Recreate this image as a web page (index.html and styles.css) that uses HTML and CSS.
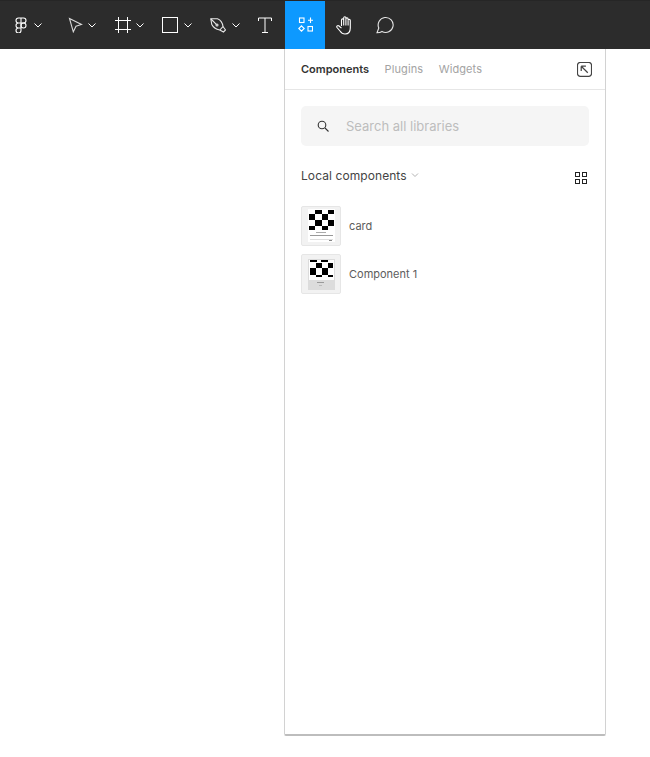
FILE: index.html
```html
<!DOCTYPE html>
<html lang="en">
<head>
    <meta charset="UTF-8">
    <title>Components</title>
    <link rel="stylesheet" href="styles.css">
</head>
<body>
    <header class="toolbar">
        <!-- Main menu -->
        <div class="tool tool-logo">
            <svg class="icon" viewBox="0 0 16 16" fill="none" stroke="#fff" stroke-width="1.1">
                <path d="M8 1H5.500a2.500 2.500 0 0 0 0 5H8zM8 1h2.500a2.500 2.500 0 0 1 0 5H8zM8 6H5.500a2.500 2.500 0 0 0 0 5H8zM8 11H5.500A2.500 2.500 0 1 0 8 13.500z"/>
                <circle cx="10.500" cy="8.500" r="2.500"/>
            </svg>
            <svg class="chevron" viewBox="0 0 8 8" fill="none" stroke="#fff" stroke-width="1"><path d="M.5 2.500 4 6l3.500-3.500"/></svg>
        </div>
        <!-- Move -->
        <div class="tool">
            <svg class="icon" viewBox="0 0 16 16" fill="none" stroke="#d8d8d8" stroke-width="1.1"><path d="M2.500 1.500 14.500 7.500 9 9.300 6.300 14.800z"/></svg>
            <svg class="chevron" viewBox="0 0 8 8" fill="none" stroke="#fff" stroke-width="1"><path d="M.5 2.500 4 6l3.500-3.500"/></svg>
        </div>
        <!-- Frame -->
        <div class="tool">
            <svg class="icon" viewBox="0 0 16 16" fill="none" stroke="#fff" stroke-width="1"><path d="M3.500 0v16M12.500 0v16M0 3.500h16M0 12.500h16"/></svg>
            <svg class="chevron" viewBox="0 0 8 8" fill="none" stroke="#fff" stroke-width="1"><path d="M.5 2.500 4 6l3.500-3.500"/></svg>
        </div>
        <!-- Rectangle -->
        <div class="tool tool-wide">
            <svg class="icon" viewBox="0 0 16 16" fill="none" stroke="#fff" stroke-width="1"><rect x=".5" y=".5" width="15" height="15"/></svg>
            <svg class="chevron" viewBox="0 0 8 8" fill="none" stroke="#fff" stroke-width="1"><path d="M.5 2.500 4 6l3.500-3.500"/></svg>
        </div>
        <!-- Pen -->
        <div class="tool tool-wide">
            <svg class="icon" viewBox="0 0 16 16" fill="none" stroke="#e6e6e6" stroke-width="1.1">
                <path d="M.8 1.800 7.500 1.800C10.500 3 12.500 6 13 9.500L9.800 13C6.500 12.300 3 10 1.800 7.500z"/>
                <path d="M1 2 6.300 7.300M13 9.500 15.500 13 13.500 15 9.800 13"/>
                <circle cx="7" cy="8" r="1"/>
            </svg>
            <svg class="chevron" viewBox="0 0 8 8" fill="none" stroke="#fff" stroke-width="1"><path d="M.5 2.500 4 6l3.500-3.500"/></svg>
        </div>
        <!-- Text -->
        <div class="tool tool-text">
            <svg class="icon" viewBox="0 0 16 16" fill="none" stroke="#fff" stroke-width="1"><path d="M1.500 4V1h13v3M8 1v14.500M5 15.500h6"/></svg>
        </div>
        <!-- Resources, active -->
        <div class="tool tool-square tool-active">
            <svg class="icon" viewBox="0 0 16 16" fill="none" stroke="#fff" stroke-width="1.1">
                <rect x="2.500" y="1" width="4.500" height="4.500"/>
                <path d="M13.500 .5v5.500M11 3.200h5"/>
                <path d="M4.500 8.800 7.200 11.500 4.500 14.200 1.800 11.500z"/>
                <rect x="11" y="9.500" width="4.500" height="4.500"/>
            </svg>
        </div>
        <!-- Hand -->
        <div class="tool tool-square">
            <svg class="hand" viewBox="0 0 18 20" fill="none" stroke="#fff" stroke-width="1.1">
                <path d="M5.500 11V5a1.100 1.100 0 0 1 2.200 0V2.800a1.100 1.100 0 0 1 2.200 0V4a1.100 1.100 0 0 1 2.200 0v1.500a1.100 1.100 0 0 1 2.200 0V13c0 3.500-2 6-5.300 6-2.500 0-3.700-1-5-3L1 12.500c-.8-1.300.8-2.600 2-1.500l2.500 2.200"/>
                <path d="M7.700 5v5.500M9.900 4v6.500M12.100 5.500v5"/>
            </svg>
        </div>
        <!-- Comment -->
        <div class="tool tool-square">
            <svg class="comment" viewBox="0 0 18 18" fill="none" stroke="#e6e6e6" stroke-width="1.1">
                <path d="M1 16.800 2.800 12A7.500 7.500 0 1 1 6 15.500C4.500 16.500 3 16.800 1 16.800z"/>
            </svg>
        </div>
    </header>

    <main class="panel">
        <div class="tabs">
            <span class="tab tab-active">Components</span>
            <span class="tab">Plugins</span>
            <span class="tab">Widgets</span>
            <svg class="pop-icon" viewBox="0 0 16 16" fill="none" stroke="#444" stroke-width="1.3">
                <path d="M4 15.300H3.500a3 3 0 0 1-3-3V3.500a3 3 0 0 1 3-3h9a3 3 0 0 1 3 3v8.800a3 3 0 0 1-3 3H4"/>
                <path d="M4.500 4.500h5M4.500 4.500v5M4.500 4.500l7 7"/>
            </svg>
        </div>

        <div class="search">
            <svg class="search-icon" viewBox="0 0 12 12" fill="none" stroke="#333" stroke-width="1.1">
                <circle cx="5" cy="5" r="3.800"/>
                <path d="M8 8l3.500 3.500"/>
            </svg>
            <span class="search-text">Search all libraries</span>
        </div>

        <div class="section">
            <span class="section-title">Local components</span>
            <svg class="section-chevron" viewBox="0 0 8 8" fill="none" stroke="#b3b3b3" stroke-width="1"><path d="M1 2.500 4 5.500l3-3"/></svg>
            <svg class="grid-icon" viewBox="0 0 12 12" fill="none" stroke="#222" stroke-width="1">
                <rect x=".5" y=".5" width="4" height="4"/>
                <rect x="7.500" y=".5" width="4" height="4"/>
                <rect x=".5" y="7.500" width="4" height="4"/>
                <rect x="7.500" y="7.500" width="4" height="4"/>
            </svg>
        </div>

        <ul class="list">
            <li class="item">
                <svg class="thumb" viewBox="1 1 38 38">
                    <rect x="7" y="3" width="27" height="33" fill="#fff"/>
                    <g fill="#000">
                        <rect x="14" y="4" width="7" height="4"/><rect x="27" y="4" width="6" height="4"/>
                        <rect x="8" y="8" width="6" height="6"/><rect x="21" y="8" width="6" height="6"/>
                        <rect x="14" y="14" width="7" height="6"/><rect x="27" y="14" width="6" height="6"/>
                        <rect x="8" y="20" width="6" height="4"/><rect x="21" y="20" width="6" height="4"/>
                    </g>
                    <rect x="15" y="26" width="10" height="1" fill="#aaa"/>
                    <rect x="9" y="29" width="23" height="1" fill="#999"/>
                    <rect x="9" y="33" width="23" height="1" fill="#ddd"/>
                    <rect x="28" y="34" width="3" height="1" fill="#888"/>
                </svg>
                <span class="item-name">card</span>
            </li>
            <li class="item">
                <svg class="thumb" viewBox="1 1 38 38">
                    <rect x="7" y="5" width="27" height="31" fill="#dcdcdc"/>
                    <rect x="8" y="6" width="25" height="20" fill="#fff"/>
                    <g fill="#000">
                        <rect x="9" y="6" width="7" height="2"/><rect x="20" y="6" width="7" height="2"/>
                        <rect x="15" y="9" width="6" height="5"/><rect x="27" y="9" width="5" height="5"/>
                        <rect x="9" y="14" width="6" height="7"/><rect x="21" y="14" width="6" height="7"/>
                        <rect x="15" y="21" width="6" height="2"/><rect x="27" y="21" width="5" height="2"/>
                    </g>
                    <rect x="16" y="28" width="7" height="1" fill="#999"/>
                    <rect x="18" y="31" width="3" height="1" fill="#bbb"/>
                </svg>
                <span class="item-name">Component 1</span>
            </li>
        </ul>
    </main>
</body>
</html>
```

FILE: styles.css
```css
/* General */
body {
    margin: 0;
    background-color: #ffffff;
    font-family: "Inter", "Liberation Sans", sans-serif;
    color: #333333;
}

/* Toolbar */
.toolbar {
    display: flex;
    height: 48px;
    background-color: #2c2c2c;
    border-top: 1px solid #262626;
}

.tool {
    display: flex;
    align-items: center;
    justify-content: center;
    gap: 5px;
    width: 48px;
}

.tool-wide {
    gap: 6px;
}

.tool-logo {
    box-sizing: border-box;
    width: 57px;
    padding-right: 3px;
}

.tool-text {
    box-sizing: border-box;
    width: 36px;
    padding-right: 4px;
}

.tool-square {
    width: 40px;
}

.tool-active {
    background-color: #0d99ff;
}

.icon {
    width: 16px;
    height: 16px;
}

.chevron {
    width: 8px;
    height: 8px;
}

.hand {
    width: 18px;
    height: 20px;
}

.comment {
    width: 18px;
    height: 18px;
}

/* Panel under the active tool */
.panel {
    box-sizing: border-box;
    width: 322px;
    height: 687px;
    margin-left: 284px;
    background-color: #ffffff;
    border: 1px solid #d2d2d2;
    border-top: none;
    border-bottom: 2px solid #bdbdbd;
    border-radius: 0 0 2px 2px;
}

/* Tabs */
.tabs {
    display: flex;
    align-items: center;
    gap: 15.5px;
    height: 40px;
    padding: 0 12px 0 16px;
    border-bottom: 1px solid #e6e6e6;
    font-size: 11px;
}

.tab {
    color: #a3a3a3;
    letter-spacing: 0.1px;
}

.tab-active {
    color: #333333;
    font-weight: 600;
    letter-spacing: 0;
}

.pop-icon {
    width: 15px;
    height: 15px;
    margin-left: auto;
    margin-right: 1px;
}

/* Search */
.search {
    display: flex;
    align-items: center;
    height: 40px;
    margin: 16px 16px 0;
    padding-left: 16px;
    background-color: #f5f5f5;
    border-radius: 5px;
}

.search-icon {
    width: 12px;
    height: 12px;
}

.search-text {
    margin-left: 17px;
    font-size: 13px;
    color: #bdbdbd;
}

/* Local components heading */
.section {
    display: flex;
    align-items: center;
    gap: 4px;
    height: 16px;
    margin: 21px 18px 0 16px;
}

.section-title {
    font-size: 12px;
    letter-spacing: 0.08px;
    color: #444444;
}

.section-chevron {
    width: 8px;
    height: 8px;
}

.grid-icon {
    width: 12px;
    height: 12px;
    margin-left: auto;
    margin-top: 6px;
}

/* Component list */
.list {
    display: flex;
    flex-direction: column;
    gap: 8px;
    margin: 23px 16px 0;
    padding: 0;
    list-style: none;
}

.item {
    display: flex;
    align-items: center;
    gap: 8px;
}

.thumb {
    box-sizing: border-box;
    width: 40px;
    height: 40px;
    background-color: #f2f2f2;
    border: 1px solid #e6e6e6;
    border-radius: 2px;
}

.item-name {
    font-size: 11px;
    color: #5c5c5c;
}
```
